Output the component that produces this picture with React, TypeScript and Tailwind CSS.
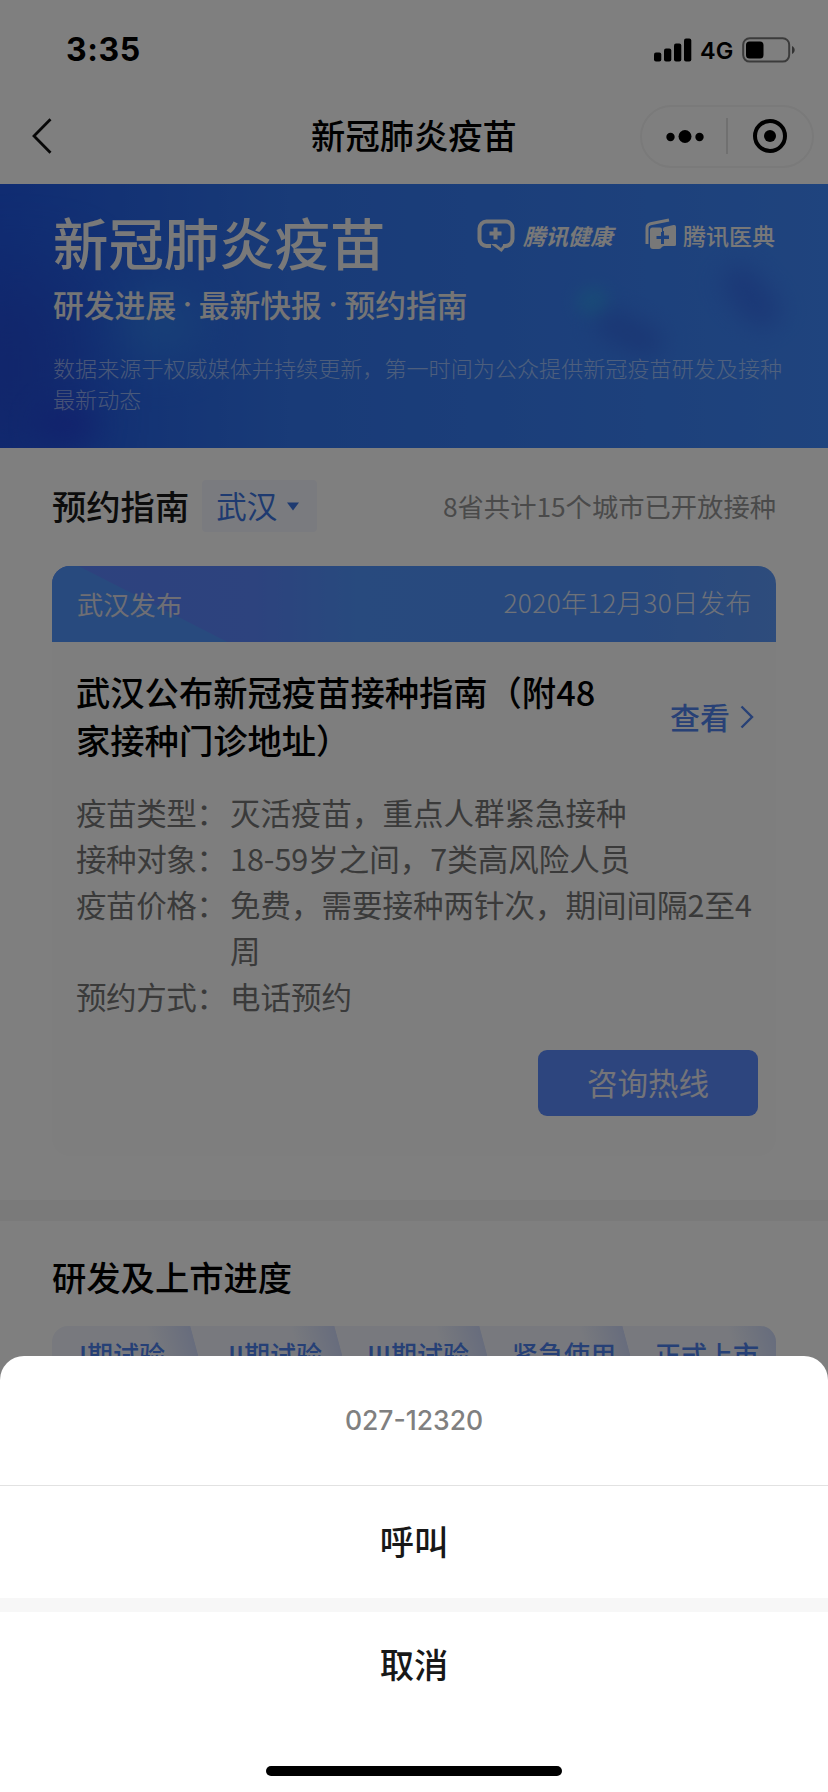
import React from 'react';
import clsx from 'clsx';

interface InfoRow {
  label: string;
  value: string;
}

const INFO_ROWS: InfoRow[] = [
  { label: '疫苗类型：', value: '灭活疫苗，重点人群紧急接种' },
  { label: '接种对象：', value: '18-59岁之间，7类高风险人员' },
  { label: '疫苗价格：', value: '免费，需要接种两针次，期间间隔2至4周' },
  { label: '预约方式：', value: '电话预约' },
];

const STAGES = [
  { name: 'I期试验', width: 'w-[146px]', pad: 'pl-[27px]' },
  { name: 'II期试验', width: 'w-[144px]', pad: 'pl-[30px]' },
  { name: 'III期试验', width: 'w-[145px]', pad: 'pl-[25px]' },
  { name: '紧急使用', width: 'w-[143px]', pad: 'pl-[25px]' },
  { name: '正式上市', width: 'w-[146px]', pad: 'pl-[25px]' },
];

const StatusBar = () => (
  <div className="h-[88px] flex items-start justify-between pl-[66px] pr-[32px] pt-[30px] text-black font-['Inter',sans-serif]">
    <span className="text-[32px] leading-10 font-bold tracking-[0.600px]">3:35</span>
    <div className="flex items-center h-10">
      <svg width="38" height="24" viewBox="0 0 38 24" className="mr-2">
        <rect x="0" y="14.5" width="7.3" height="9" rx="2" />
        <rect x="10" y="10.5" width="7.3" height="13" rx="2" />
        <rect x="20" y="5.5" width="7.3" height="18" rx="2" />
        <rect x="30" y="0.5" width="7.3" height="23" rx="2" />
      </svg>
      <span className="text-[23.500px] leading-6 font-semibold w-[42px] pt-[2px]">4G</span>
      <svg width="54" height="26" viewBox="0 0 54 26">
        <rect x="1.2" y="1.2" width="46" height="23.4" rx="6.5" fill="none" stroke="#777" strokeWidth="2" />
        <rect x="4" y="4.5" width="17.5" height="17" rx="3.5" />
        <path d="M50 9v8c3.6-1.4 3.6-6.600 0-8z" fill="#666" />
      </svg>
    </div>
  </div>
);

const NavBar = () => (
  <div className="h-24 grid grid-cols-[1fr_auto_1fr] items-center">
    <svg width="21" height="36" viewBox="0 0 21 36" className="ml-[31px]" fill="none" stroke="#111" strokeWidth="2.8">
      <path d="M19.500 1.200L3 18l16.500 16.800" />
    </svg>
    <h1 className="pb-1 text-[34.3px] leading-none font-medium text-black">新冠肺炎疫苗</h1>
    <div className="justify-self-end mr-[14px] w-[174px] h-[63px] rounded-full border-2 border-[#f4f4f4] flex items-center">
      <svg width="170" height="60" viewBox="0 0 170 60">
        <circle cx="28.500" cy="31" r="4.200" />
        <circle cx="43" cy="30.500" r="6.500" />
        <circle cx="57.500" cy="31" r="4.200" />
        <path d="M85 12v36" stroke="#ccc" strokeWidth="1.200" />
        <circle cx="128" cy="30" r="15" fill="none" stroke="#000" strokeWidth="4" />
        <circle cx="128" cy="30" r="6" />
      </svg>
    </div>
  </div>
);

const Dot = () => <span className="w-[22.500px] text-center font-['Inter',sans-serif]">·</span>;

const Hero = () => (
  <section className="relative h-[264px] overflow-hidden bg-linear-to-r from-[#2058e4] via-[#3276f0] via-35% to-[#3f88fc] text-white">
    {/* soft glow blobs of the banner art */}
    <div className="absolute -left-10 top-24 w-28 h-44 bg-[#2542cc] opacity-60 blur-2xl" />
    <div className="absolute left-[120px] top-[105px] w-20 h-[70px] rounded-full bg-[#3690f4] opacity-60 blur-xl" />
    <div className="absolute left-[40px] top-[225px] w-14 h-8 rounded-full bg-[#2430d4] opacity-60 blur-lg" />
    <div className="absolute left-[577px] top-[104px] w-8 h-7 rounded-full bg-[#30a4ec] opacity-60 blur-sm" />
    <div className="absolute left-[594px] top-[135px] w-[70px] h-7 rounded-full bg-[#3468e4] opacity-80 blur-md rotate-[25deg]" />
    <div className="absolute left-[716px] top-[95px] w-[70px] h-9 rounded-full bg-[#3468e8] opacity-70 blur-md rotate-[50deg]" />

    <div className="relative pl-[53px] pt-[29px]">
      <div className="flex items-start">
        <h2 className="w-[424px] text-[55.4px] leading-[56px] font-medium text-[#f2f2f2]">新冠肺炎疫苗</h2>
        <div className="flex items-center mt-[6px] h-[34px] w-[168px] text-[#f0f0f0]">
          <svg width="38" height="34" viewBox="0 0 38 34" fill="none" stroke="currentColor">
            <path d="M14 27H9.500a7 7 0 0 1-7-7V9.500a7 7 0 0 1 7-7h19a7 7 0 0 1 7 7V20a7 7 0 0 1-7 7h-2.500" strokeWidth="4" />
            <path d="M14 25h5l5 4 3-4h4l-6.500 8z" fill="currentColor" stroke="none" />
            <path d="M18.500 8.500v12M12.500 14.500h12" strokeWidth="4" />
          </svg>
          <span className="ml-2 mb-0.5 text-[22.4px] leading-none font-bold italic">腾讯健康</span>
        </div>
        <div className="flex items-center mt-[5px] h-[34px] text-[#f0f0f0]">
          <svg width="32" height="34" viewBox="0 0 32 34">
            <path d="M2 26V10q0-3.500 3.500-4.200L24 2" fill="none" stroke="currentColor" strokeWidth="3" />
            <path fillRule="evenodd" fill="currentColor" d="M5 12q0-2.500 2.500-2.500H15q2 0 2 2v2.500h-1v4h-4.500v3H16v5h3v-5h5v-3.500h-5v-4.500h-1V11q0-1.500 2-2l8.500-2q2.500-.5 2.500 2V26.500q0 1.500-1.500 1.500H19q-1.500 0-2.500 1.500-1 1.500-3 1.500H8q-3 0-3-3z" />
          </svg>
          <span className="ml-[6px] text-[23px] leading-none font-medium">腾讯医典</span>
        </div>
      </div>
      <p className="mt-[18px] flex text-[30.8px] leading-[34px] font-medium text-[#eaeaea]">
        <span>研发进展</span>
        <Dot />
        <span>最新快报</span>
        <Dot />
        <span>预约指南</span>
      </p>
      <p className="mt-[31px] w-[740px] text-[22.1px] leading-[31px] font-light text-white/50">
        数据来源于权威媒体并持续更新，第一时间为公众提供新冠疫苗研发及接种最新动态
      </p>
    </div>
  </section>
);

const GuideCard = () => (
  <div className="mt-[34px] w-[724px] h-[590px] rounded-[18px] overflow-hidden bg-[#fcfcfc]">
    <div className="h-[76px] pl-[25px] pr-[24px] flex items-center justify-between text-[26.3px] leading-none bg-[linear-gradient(27deg,#5094fc_0_20%,transparent_20.200%),linear-gradient(90deg,#5c84fc_0%,#5a86fc_28%,#5094fc_42%,#5092fc_80%,#5c98f8_100%)]">
      <span className="text-[#dcdce8]">武汉发布</span>
      <span className="text-[#dce2f2] font-light pb-1 tracking-[0.350px]">2020年12月30日发布</span>
    </div>
    <div className="pl-[24px] pr-[18px]">
      <div className="pt-[25px] flex">
        <h3 className="w-[594px] pr-14 text-[34.3px] leading-[48px] font-medium text-black">武汉公布新冠疫苗接种指南（附48家接种门诊地址）</h3>
        <div className="flex items-center h-[50px] mt-[25px] text-[#5082ec]">
          <span className="pb-0.5 text-[30px] leading-none font-medium">查看</span>
          <svg width="14" height="24" viewBox="0 0 14 24" className="ml-[10px]" fill="none" stroke="currentColor" strokeWidth="2.400">
            <path d="M1.500 1.500L12 12 1.500 22.500" />
          </svg>
        </div>
      </div>
      <dl className="mt-[26px] text-[30.5px] leading-[46px] text-[#747474]">
        {INFO_ROWS.map((row) => (
          <div key={row.label} className="flex">
            <dt className="w-[154px] shrink-0 tracking-[-0.400px]">{row.label}</dt>
            <dd className="w-[528px] shrink-0">{row.value}</dd>
          </div>
        ))}
      </dl>
      <div className="mt-[31px] flex justify-end">
        <button className="w-[220px] h-[66px] pb-0.5 rounded-[9px] bg-[#5a8afc] text-[30.500px] leading-none text-[#e8e8f0]">咨询热线</button>
      </div>
    </div>
  </div>
);

const Guide = () => (
  <section className="h-[752px] pl-[52px] pt-[32px]">
    <div className="flex items-center h-[52px] w-[724px]">
      <h2 className="pb-0.5 text-[34.3px] leading-none font-medium text-[#181818]">预约指南</h2>
      <div className="ml-[13px] w-[115px] h-[52px] rounded bg-[#f4f6fe] flex items-center pl-[14px] text-[#3c74e0]">
        <span className="pb-0.5 text-[30.500px] leading-none">武汉</span>
        <svg width="12" height="9" viewBox="0 0 12 9" className="ml-[10px]">
          <path d="M0 .500h12L6 8.500z" fill="currentColor" />
        </svg>
      </div>
      <span className="ml-auto text-[26.3px] leading-none text-[#949494]">8省共计15个城市已开放接种</span>
    </div>
    <GuideCard />
  </section>
);

const Progress = () => (
  <section className="pl-[52px] pt-[37px]">
    <h2 className="text-[34.3px] leading-[36px] font-medium text-black">研发及上市进度</h2>
    <div className="mt-[32px] w-[724px] h-16 flex rounded-2xl overflow-hidden bg-[#f0f3fc]">
      {STAGES.map((stage, i) => (
        <div
          key={stage.name}
          className={clsx('h-16 pb-2 shrink-0 flex items-center text-[26px] leading-none font-medium text-[#4c80ec]', stage.width, stage.pad,
            i < STAGES.length - 1
              ? 'bg-[linear-gradient(75deg,transparent_68%,#d0dafa_95%,transparent_95.500%)]'
              : 'bg-[linear-gradient(75deg,transparent_70%,#ccd8fa_100%)]')}
        >
          {stage.name}
        </div>
      ))}
    </div>
  </section>
);

const CallSheet = () => (
  <div className="absolute inset-x-0 bottom-0 h-[436px] rounded-t-[24px] bg-white flex flex-col items-center">
    <div className="w-full h-[130px] border-b border-[#e2e2e2] flex items-center justify-center text-[26.500px] leading-none font-medium text-[#808080] font-['Inter',sans-serif]">
      027-12320
    </div>
    <button className="w-full h-[112px] pb-[3px] text-[34.3px] leading-none font-medium text-[#181818]">呼叫</button>
    <div className="w-full h-[14px] bg-[#f7f7f7]" />
    <button className="w-full h-[106px] pb-[3px] text-[34.3px] leading-none font-medium text-[#181818]">取消</button>
    <div className="mt-auto mb-4 w-[296px] h-[10px] rounded-full bg-black" />
  </div>
);

export default function App() {
  return (
    <div className="relative w-[828px] h-[1792px] overflow-hidden bg-white font-['Noto_Sans_CJK_SC',sans-serif]">
      <StatusBar />
      <NavBar />
      <Hero />
      <Guide />
      <div className="h-[21px] bg-[#f4f4f4]" />
      <Progress />
      <div className="absolute inset-0 bg-black/50" />
      <CallSheet />
    </div>
  );
}
